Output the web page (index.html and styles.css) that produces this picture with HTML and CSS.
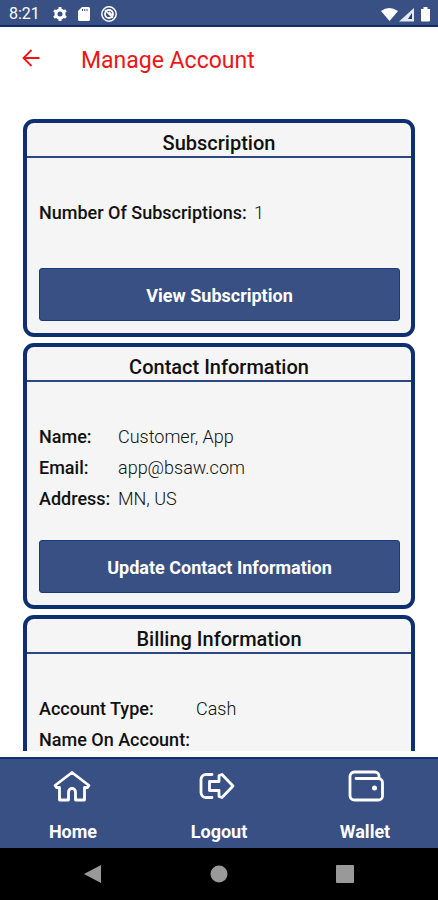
FILE: index.html
```html
<!DOCTYPE html>
<html lang="en">
<head>
    <meta charset="UTF-8">
    <meta name="viewport" content="width=device-width, initial-scale=1.0">
    <title>Manage Account</title>
    <link rel="stylesheet" href="styles.css">
</head>
<body>
    <div class="status-bar">
        <span class="time">8:21</span>
        <svg width="16" height="16" viewBox="0 0 16 16">
            <circle cx="8" cy="8" r="4" fill="none" stroke="#fff" stroke-width="3"/>
            <path d="M8 1v3M8 12v3M2 4.500l2.500 1.500M11.500 10l2.500 1.500M2 11.500l2.500-1.500M11.500 6l2.500-1.500" stroke="#fff" stroke-width="3"/>
        </svg>
        <svg width="16" height="16" viewBox="0 0 16 16">
            <path d="M6 1h6.500a1.500 1.500 0 0 1 1.500 1.500v11a1.500 1.500 0 0 1-1.500 1.500h-9A1.500 1.500 0 0 1 2 13.500V5z" fill="#fff"/>
            <path d="M6.500 3v2M8.700 3v2M11 3v2" stroke="#385083" stroke-width="1"/>
        </svg>
        <svg width="18" height="18" viewBox="0 0 18 18" fill="none" stroke="#fff">
            <circle cx="9" cy="9" r="7.200" stroke-width="1.500"/>
            <circle cx="9" cy="9" r="4" stroke-width="1.800"/>
            <path d="M5 5l8 8M9 7l3 3" stroke-width="1.500"/>
        </svg>
        <svg class="signal" width="52" height="18" viewBox="0 0 52 18">
            <path d="M1 6Q9 0 18 6L9.500 16z" fill="#fff"/>
            <path d="M34 3v13.500H19z" fill="#e3e8f2"/>
            <path d="M32 8v6h-4z" fill="#1c3775"/>
            <path d="M41 4h2.500V2h4V4H50v11.500a1 1 0 0 1-1 1h-7a1 1 0 0 1-1-1z" fill="#fff"/>
        </svg>
    </div>
    <header>
        <button class="back" aria-label="Back">
            <svg width="20" height="20" viewBox="0 0 20 20" fill="none" stroke="#ee1515" stroke-width="1.800">
                <path d="M18.500 10H3M10.500 2L2.500 10l8 8"/>
            </svg>
        </button>
        <h1>Manage Account</h1>
    </header>
    <main>
        <section class="card">
            <h2>Subscription</h2>
            <div class="card-body">
                <dl class="count">
                    <dt>Number Of Subscriptions:</dt>
                    <dd>1</dd>
                </dl>
                <button class="action">View Subscription</button>
            </div>
        </section>
        <section class="card">
            <h2>Contact Information</h2>
            <div class="card-body">
                <dl class="contact">
                    <dt>Name:</dt>
                    <dd>Customer, App</dd>
                    <dt>Email:</dt>
                    <dd>app@bsaw.com</dd>
                    <dt>Address:</dt>
                    <dd>MN, US</dd>
                </dl>
                <button class="action">Update Contact Information</button>
            </div>
        </section>
        <section class="card">
            <h2>Billing Information</h2>
            <div class="card-body">
                <dl class="billing">
                    <dt>Account Type:</dt>
                    <dd>Cash</dd>
                    <dt>Name On Account:</dt>
                    <dd></dd>
                </dl>
            </div>
        </section>
    </main>
    <nav class="tabs">
        <a href="#home">
            <svg width="40" height="32" viewBox="0 0 40 32" fill="none" stroke="#fff" stroke-width="2.800" stroke-linejoin="round">
                <path d="M19 2.500L2 15.500l1.500 2H6.500v12.500h9V22a3.500 3.500 0 0 1 7 0v8h9V17.500h3l1.500-2z"/>
            </svg>
            Home
        </a>
        <a href="#logout">
            <svg width="40" height="32" viewBox="0 0 40 32" fill="none" stroke="#fff" stroke-width="2.800" stroke-linecap="round" stroke-linejoin="round">
                <path d="M13 4.500H7.500A5 5 0 0 0 2 9.500V22.500A5 5 0 0 0 7.500 27.500H13"/>
                <path d="M10.500 11.500H20V5.500L23 4.500L34 16L23 27.500L20 26.500V20.500H10.500z"/>
            </svg>
            Logout
        </a>
        <a href="#wallet">
            <svg width="40" height="32" viewBox="0 0 40 32" fill="none" stroke="#fff" stroke-width="2.800" stroke-linecap="round" stroke-linejoin="round">
                <path d="M11 8.500H33.500A4 4 0 0 1 37.500 12.500V26A4 4 0 0 1 33.500 30H9.500A4.500 4.500 0 0 1 5 25.500V6.500A4.500 4.500 0 0 1 9.500 2H30A4 4 0 0 1 34 6V8.500"/>
                <circle cx="29.500" cy="18" r="2.500" fill="#fff" stroke="none"/>
            </svg>
            Wallet
        </a>
    </nav>
    <div class="system-nav">
        <svg width="18" height="18" viewBox="0 0 18 18"><path d="M17 0v18L0 9z" fill="#999"/></svg>
        <svg width="18" height="18" viewBox="0 0 18 18"><circle cx="9" cy="9" r="8.500" fill="#999"/></svg>
        <svg width="18" height="18" viewBox="0 0 18 18"><rect width="18" height="18" rx="1" fill="#999"/></svg>
    </div>
</body>
</html>
```
FILE: styles.css
```css
* {
    margin: 0;
    padding: 0;
    box-sizing: border-box;
}
body {
    font-family: Roboto, sans-serif;
    background: #fff;
    color: #111;
    display: flex;
    flex-direction: column;
    height: 100vh;
    overflow: hidden;
}
button {
    font-family: inherit;
    border: none;
    cursor: pointer;
}
.status-bar {
    display: flex;
    align-items: center;
    gap: 8px;
    height: 27px;
    flex-shrink: 0;
    padding: 2px 6px 0 9px;
    background: #385083;
    border-bottom: 2px solid #0f2b6c;
    color: #fff;
}
.time {
    font-size: 16px;
    width: 35px;
}
.signal {
    margin-left: auto;
}
header {
    display: flex;
    align-items: center;
    height: 66px;
    flex-shrink: 0;
    padding: 0 21px;
}
.back {
    display: flex;
    width: 60px;
    padding-bottom: 4px;
    background: none;
}
h1 {
    font-size: 23px;
    font-weight: 400;
    color: #ee1515;
}
main {
    flex: 1;
    display: flex;
    flex-direction: column;
    gap: 6px;
    min-height: 0;
    overflow: hidden;
    margin-bottom: 6px;
    padding: 26px 23px 0;
}
.card {
    flex-shrink: 0;
    background: #f5f5f5;
    border: 4px solid #0f2f70;
    border-radius: 11px;
}
.card h2 {
    height: 35px;
    padding-top: 8px;
    border-bottom: 2px solid #2c4680;
    font-size: 20px;
    line-height: 25px;
    font-weight: 500;
    text-align: center;
}
.card-body {
    padding: 39px 11px 12px 12px;
}
dl {
    display: grid;
    font-size: 18px;
    line-height: 31px;
    margin-bottom: 26px;
}
dt {
    font-weight: 500;
}
dd {
    font-weight: 300;
}
.count {
    grid-template-columns: auto 1fr;
    column-gap: 7px;
    margin-bottom: 40px;
}
.contact {
    grid-template-columns: 79px 1fr;
}
.billing {
    grid-template-columns: 157px 1fr;
}
.action {
    display: block;
    width: 100%;
    height: 53px;
    padding-top: 2px;
    background: #385083;
    border: 1px solid #1b3a78;
    border-radius: 3px;
    color: #fff;
    font-size: 18px;
    font-weight: 700;
}
.tabs {
    display: flex;
    justify-content: space-between;
    height: 91px;
    flex-shrink: 0;
    background: #385083;
    border-top: 2px solid #0f2f70;
}
.tabs a {
    flex: 1;
    display: flex;
    flex-direction: column;
    align-items: center;
    gap: 18px;
    padding-top: 11px;
    color: #fff;
    font-size: 18px;
    line-height: 24px;
    font-weight: 700;
    text-decoration: none;
}
.system-nav {
    display: flex;
    align-items: center;
    justify-content: center;
    gap: 108px;
    height: 52px;
    flex-shrink: 0;
    background: #000;
}
```
